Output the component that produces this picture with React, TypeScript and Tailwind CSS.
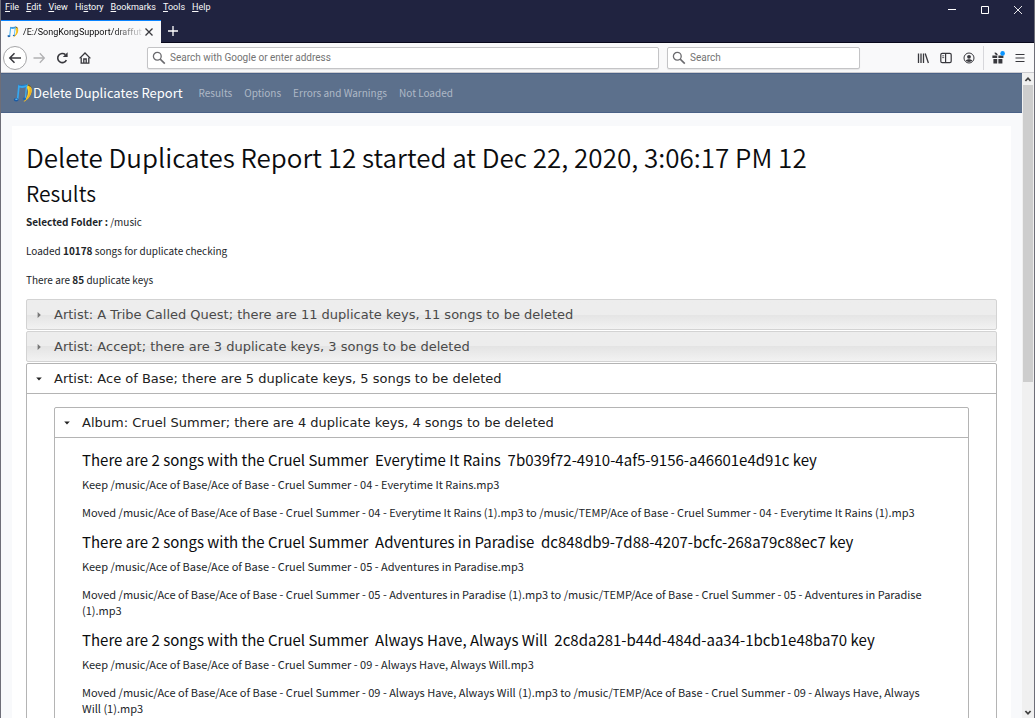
import { useState } from "react";
import type { ReactNode } from "react";

const MENUS: [string, string, string][] = [
  ["", "F", "ile"],
  ["", "E", "dit"],
  ["", "V", "iew"],
  ["Hi", "s", "tory"],
  ["", "B", "ookmarks"],
  ["", "T", "ools"],
  ["", "H", "elp"],
];

const NAV_LINKS = ["Results", "Options", "Errors and Warnings", "Not Loaded"];

const GROUPS = [
  {
    title: "Everytime It Rains",
    track: "04",
    key: "7b039f72-4910-4af5-9156-a46601e4d91c",
  },
  {
    title: "Adventures in Paradise",
    track: "05",
    key: "dc848db9-7d88-4207-bcfc-268a79c88ec7",
  },
  {
    title: "Always Have, Always Will",
    track: "09",
    key: "2c8da281-b44d-484d-aa34-1bcb1e48ba70",
  },
];

function NoteLogo({ className }: { className: string }) {
  return (
    <svg viewBox="0 0 20 20" className={className} aria-hidden="true">
      <path d="M14.6 1 C20.6 3.2 21 12.4 10.6 19 C15.6 12.8 16.2 8 13.4 4 Z" fill="#fbd62f" />
      <path d="M10.6 19 C19.2 13.8 20.6 5.4 14.6 1 C18 6 17 13.4 10.6 19 Z" fill="#f0b020" />
      <path d="M14.6 1 C16.8 1.8 18.2 3.4 18.8 5.4 C17.6 3.6 16.2 2.6 14.2 2.4 Z" fill="#5a4a30" />
      <path d="M5.2 1.8 C8.2 2.6 11.4 2.2 14.6 0.8 L14.4 3.6 C12 4.8 9.2 5.2 6.6 4.6 L5.4 16.4 L3.8 16.2 Z" fill="#35a9f2" />
      <path d="M5.6 2 C8.4 2.9 11.4 2.5 14.4 1.2" fill="none" stroke="#1c63a8" strokeWidth="0.7" />
      <path d="M14.2 3.2 L13 15.2 L11.8 15.2 L12.8 4.4 Z" fill="#3fb2f5" />
      <ellipse cx="3.2" cy="16.8" rx="2.4" ry="1.8" fill="#1b5ca6" />
      <ellipse cx="3.4" cy="16.3" rx="1.3" ry="0.8" fill="#58bdf8" />
      <ellipse cx="11.4" cy="15.8" rx="1.7" ry="1.3" fill="#1f68b4" />
    </svg>
  );
}

function Lens() {
  return (
    <svg viewBox="0 0 14 14" className="size-3.5 shrink-0 text-[#6a6a6e]" fill="none" stroke="currentColor" aria-hidden="true">
      <circle cx="5.3" cy="5.3" r="3.9" strokeWidth="1.3" />
      <path d="M8.2 8.2 L12.8 12.6" strokeWidth="1.6" />
    </svg>
  );
}

function IconButton({ label, className = "", children }: { label: string; className?: string; children: ReactNode }) {
  return (
    <button type="button" aria-label={label} className={`flex shrink-0 items-center justify-center text-[#38383d] ${className}`}>
      {children}
    </button>
  );
}

function MenuBar() {
  return (
    <div className="flex h-5 items-start justify-between">
      <nav className="flex h-3.5 items-center gap-[7px] pl-1 text-[9px] leading-3 text-[#f9f9fa]">
        {MENUS.map(([before, key, after]) => (
          <button type="button" key={key + after}>
            {before}
            <span className="underline">{key}</span>
            {after}
          </button>
        ))}
      </nav>
      <div className="flex h-[18px] items-center gap-[21px] pr-2.5">
        <IconButton label="Minimize" className="size-3">
          <svg viewBox="0 0 12 12" className="size-3" stroke="#fff" strokeWidth="1" aria-hidden="true">
            <path d="M2 6.5 H10" />
          </svg>
        </IconButton>
        <IconButton label="Maximize" className="size-3">
          <svg viewBox="0 0 12 12" className="size-3" fill="none" stroke="#fff" strokeWidth="1" aria-hidden="true">
            <path d="M2.5 3.5 H9.5 V10.5 H2.5 Z" />
          </svg>
        </IconButton>
        <IconButton label="Close" className="size-3">
          <svg viewBox="0 0 12 12" className="size-3" stroke="#fff" strokeWidth="0.9" aria-hidden="true">
            <path d="M2 3 L10 11 M10 3 L2 11" />
          </svg>
        </IconButton>
      </div>
    </div>
  );
}

function TabStrip() {
  return (
    <div className="flex h-[23px]">
      <div className="flex w-40 items-center border-t border-[#0a84ff] bg-[#f9f9fa] pr-[7px] pl-1.5">
        <NoteLogo className="size-3 shrink-0" />
        <span className="ml-1 min-w-0 flex-1 bg-linear-to-r from-[#0c0c0d] from-75% to-[#0c0c0d20] bg-clip-text text-[9px] leading-4 whitespace-nowrap text-transparent">
          /E:/SongKongSupport/draffutt
        </span>
        <IconButton label="Close tab" className="ml-0.5 size-2.5">
          <svg viewBox="0 0 10 10" className="size-2.5" stroke="currentColor" strokeWidth="1.3" aria-hidden="true">
            <path d="M1.5 1.5 L8.5 8.5 M8.5 1.5 L1.5 8.5" />
          </svg>
        </IconButton>
      </div>
      <div className="flex flex-1 border-b border-[#08081c]">
        <IconButton label="New tab" className="w-6">
          <svg viewBox="0 0 12 12" className="size-3" stroke="#fff" strokeWidth="1.3" aria-hidden="true">
            <path d="M6 1 V11 M1 6 H11" />
          </svg>
        </IconButton>
      </div>
    </div>
  );
}

function Toolbar() {
  const [address, setAddress] = useState("");
  const [query, setQuery] = useState("");
  const box =
    "flex h-[22px] items-center gap-1 rounded-xs border border-[#c4c4c6] bg-white px-1 shadow-[0_1px_1px_rgba(0,0,0,0.08)]";
  const input = "min-w-0 flex-1 bg-transparent text-[10px] outline-none placeholder:text-[#737373]";
  return (
    <div className="flex h-[30px] items-center border-b border-[#ccccd0] bg-[#f9f9fa] pr-2">
      <div className="flex w-[146px] items-center pl-0.5">
        <IconButton label="Back" className="size-6 rounded-full border border-[#a6a6a8] bg-white">
          <svg viewBox="0 0 14 14" className="size-3.5" fill="none" stroke="currentColor" strokeWidth="1.5" aria-hidden="true">
            <path d="M13 7 H2 M6.5 2.3 L1.8 7 L6.5 11.7" />
          </svg>
        </IconButton>
        <IconButton label="Forward" className="h-6 w-[23px]">
          <svg viewBox="0 0 14 14" className="size-3.5" fill="none" stroke="#b1b1b3" strokeWidth="1.3" aria-hidden="true">
            <path d="M1.5 7 H12 M7.8 2.3 L12.3 7 L7.8 11.7" />
          </svg>
        </IconButton>
        <IconButton label="Reload" className="h-6 w-[23px]">
          <svg viewBox="0 0 14 14" className="size-3.5" fill="none" stroke="currentColor" strokeWidth="1.6" aria-hidden="true">
            <path d="M11.4 9.2 A4.6 4.6 0 1 1 10.4 3.6" />
            <path d="M12.6 1.2 V6 H7.8 Z" fill="currentColor" stroke="none" />
          </svg>
        </IconButton>
        <IconButton label="Home" className="h-6 w-[23px]">
          <svg viewBox="0 0 14 14" className="size-3.5" fill="none" stroke="currentColor" strokeWidth="1.3" aria-hidden="true">
            <path d="M1.6 7.4 L7 2 L12.4 7.4" />
            <path d="M3.2 6.6 V12.2 H10.8 V6.6" />
            <path d="M5.8 12 V8 H8.2 V12" />
          </svg>
        </IconButton>
      </div>
      <label className={`${box} min-w-0 flex-[502]`}>
        <Lens />
        <input
          type="text"
          aria-label="Address"
          value={address}
          onChange={(e) => setAddress(e.target.value)}
          placeholder="Search with Google or enter address"
          className={input}
        />
      </label>
      <label className={`${box} ml-2 min-w-0 flex-[183]`}>
        <Lens />
        <input
          type="search"
          aria-label="Search"
          value={query}
          onChange={(e) => setQuery(e.target.value)}
          placeholder="Search"
          className={input}
        />
      </label>
      <div className="ml-[51px] flex items-center">
        <IconButton label="Library" className="w-[23px]">
          <svg viewBox="0 0 12 12" className="size-3" stroke="currentColor" strokeWidth="1.3" aria-hidden="true">
            <path d="M1.5 1.5 V11 M4 1.5 V11 M6.5 1.5 V11 M8.2 1.5 L11.4 11" />
          </svg>
        </IconButton>
        <IconButton label="Sidebars" className="w-[23px]">
          <svg viewBox="0 0 12 12" className="size-3" fill="none" stroke="currentColor" strokeWidth="1.2" aria-hidden="true">
            <rect x="0.8" y="1.4" width="10.4" height="9.2" rx="1.4" />
            <path d="M5.6 1.4 V10.6" />
            <path d="M2.2 3.8 H4.2 M2.2 5.6 H4.2" strokeWidth="0.8" />
          </svg>
        </IconButton>
        <IconButton label="Account" className="w-[23px]">
          <svg viewBox="0 0 12 12" className="size-3" fill="none" aria-hidden="true">
            <circle cx="6" cy="6" r="5" stroke="currentColor" strokeWidth="1" />
            <circle cx="6" cy="4.8" r="1.9" fill="currentColor" />
            <path d="M2.8 8.8 C3.6 6.8 8.4 6.8 9.2 8.8 C7.8 10.3 4.2 10.3 2.8 8.8 Z" fill="currentColor" />
          </svg>
        </IconButton>
        <span className="ml-[3px] h-6 w-px bg-[#d7d7db]" />
        <IconButton label="What's new" className="w-7">
          <svg viewBox="0 0 14 14" className="size-3.5" fill="currentColor" aria-hidden="true">
            <path d="M1.4 4.4 H6.2 V7 H1.4 Z M7.4 4.4 H12.4 V7 H7.4 Z M2.4 8 H6.2 V12.6 H2.4 Z M7.4 8 H11.4 V12.6 H7.4 Z" />
            <path d="M3.6 1.6 C5 1.2 6.4 2.2 6.8 4.2 C4.8 4.2 3.4 3.4 3.6 1.6 Z" />
            <circle cx="11.6" cy="2.4" r="2.3" fill="#0a94ff" />
          </svg>
        </IconButton>
        <IconButton label="Open menu" className="ml-0.5 w-3">
          <svg viewBox="0 0 10 10" className="size-2.5" stroke="currentColor" strokeWidth="1.2" aria-hidden="true">
            <path d="M0.5 1.5 H9.5 M0.5 5 H9.5 M0.5 8.5 H9.5" />
          </svg>
        </IconButton>
      </div>
    </div>
  );
}

function SiteNav() {
  return (
    <nav className="flex h-10 items-center border-y border-[#4a6186] bg-[#5c708c] pl-3">
      <a href="#top" className="flex items-center text-[13px] leading-5 text-white">
        <NoteLogo className="size-5" />
        Delete Duplicates Report
      </a>
      <div className="ml-4 flex gap-3 text-[10px] leading-4 text-[#aeb8c6]">
        {NAV_LINKS.map((link) => (
          <a href="#top" key={link}>
            {link}
          </a>
        ))}
      </div>
    </nav>
  );
}

function ClosedHeader({ children }: { children: ReactNode }) {
  return (
    <button
      type="button"
      aria-expanded="false"
      className="mb-px flex h-[31px] w-full items-center rounded-xs border border-[#d3d3d3] bg-linear-to-b from-[#ededed] from-50% via-[#e4e4e4] via-50% to-[#f2f2f2] text-left font-['DejaVu_Sans',sans-serif] text-[13px] leading-4 text-[#4a4a4a]"
    >
      <span className="flex w-[27px] justify-center">
        <svg viewBox="0 0 6 6" className="mr-1 size-1.5" fill="#777" aria-hidden="true">
          <path d="M1.6 0 L4.8 3 L1.6 6 Z" />
        </svg>
      </span>
      {children}
    </button>
  );
}

function OpenPanel({ title, children }: { title: string; children: ReactNode }) {
  return (
    <section className="rounded-t-xs border border-[#b4b4b4] bg-white">
      <button
        type="button"
        aria-expanded="true"
        className="flex h-[30px] w-full items-center border-b border-[#b4b4b4] text-left font-['DejaVu_Sans',sans-serif] text-[13px] leading-4 text-[#212121]"
      >
        <span className="flex w-[27px] justify-center">
          <svg viewBox="0 0 6 6" className="mr-1 size-1.5" fill="#222" aria-hidden="true">
            <path d="M0.2 1.6 L5.8 1.6 L3 4.6 Z" />
          </svg>
        </span>
        {title}
      </button>
      {children}
    </section>
  );
}

function Report() {
  return (
    <main className="mx-[11px] mt-[13px] bg-white p-3.5 text-[11px] leading-4 text-[#212529]">
      <h1 className="font-['Noto_Sans_CJK_JP_DemiLight','Noto_Sans_CJK_JP',sans-serif] text-[26px] leading-[33px] font-[350] text-[#0b0c0e]">
        Delete Duplicates Report 12 started at Dec 22, 2020, 3:06:17 PM 12
      </h1>
      <h2 className="mt-2 font-['Noto_Sans_CJK_JP_DemiLight','Noto_Sans_CJK_JP',sans-serif] text-[21px] leading-6 font-[350] text-[#0b0c0e]">
        Results
      </h2>
      <div className="mt-[9px] mb-[11px] flex flex-col gap-[13px] text-[10px]">
        <p>
          <b>Selected Folder :</b> /music
        </p>
        <p>
          Loaded <b>10178</b> songs for duplicate checking
        </p>
        <p>
          There are <b>85</b> duplicate keys
        </p>
      </div>
      <ClosedHeader>Artist: A Tribe Called Quest; there are 11 duplicate keys, 11 songs to be deleted</ClosedHeader>
      <ClosedHeader>Artist: Accept; there are 3 duplicate keys, 3 songs to be deleted</ClosedHeader>
      <OpenPanel title="Artist: Ace of Base; there are 5 duplicate keys, 5 songs to be deleted">
        <div className="px-[27px] py-[13px]">
          <OpenPanel title="Album: Cruel Summer; there are 4 duplicate keys, 4 songs to be deleted">
            <div className="px-[27px] pt-2.5">
              {GROUPS.map(({ title, track, key }) => (
                <article key={key} className="mb-2.5">
                  <h3 className="text-[15px] leading-6 whitespace-pre-wrap text-[#0b0c0e]">
                    {`There are 2 songs with the Cruel Summer  ${title}  ${key} key`}
                  </h3>
                  <p className="mt-1">{`Keep /music/Ace of Base/Ace of Base - Cruel Summer - ${track} - ${title}.mp3`}</p>
                  <p className="mt-3">{`Moved /music/Ace of Base/Ace of Base - Cruel Summer - ${track} - ${title} (1).mp3 to /music/TEMP/Ace of Base - Cruel Summer - ${track} - ${title} (1).mp3`}</p>
                </article>
              ))}
            </div>
          </OpenPanel>
        </div>
      </OpenPanel>
    </main>
  );
}

export default function App() {
  return (
    <div id="top" className="flex h-screen flex-col overflow-hidden border-x border-[#6e6e78] bg-[#202340] font-[Roboto,sans-serif]">
      <header className="shrink-0">
        <MenuBar />
        <TabStrip />
        <Toolbar />
      </header>
      <div className="flex min-h-0 flex-1 bg-[#f8f9fb]">
        <div className="min-w-0 flex-1 overflow-hidden font-['Noto_Sans_CJK_JP',sans-serif]">
          <SiteNav />
          <Report />
        </div>
        <div className="flex w-3 flex-col items-center justify-between bg-[#f0f0f0]">
          <div className="flex w-full flex-col items-center">
            <svg viewBox="0 0 10 12" className="h-3 w-2.5" fill="none" stroke="#404040" strokeWidth="1.8" aria-hidden="true">
              <path d="M2.4 8 L5 5.2 L7.6 8" />
            </svg>
            <div className="h-[297px] w-2.5 bg-[#cdcdcd]" />
          </div>
          <svg viewBox="0 0 10 12" className="h-3 w-2.5" fill="none" stroke="#404040" strokeWidth="1.8" aria-hidden="true">
            <path d="M2.4 5 L5 7.8 L7.6 5" />
          </svg>
        </div>
      </div>
    </div>
  );
}
